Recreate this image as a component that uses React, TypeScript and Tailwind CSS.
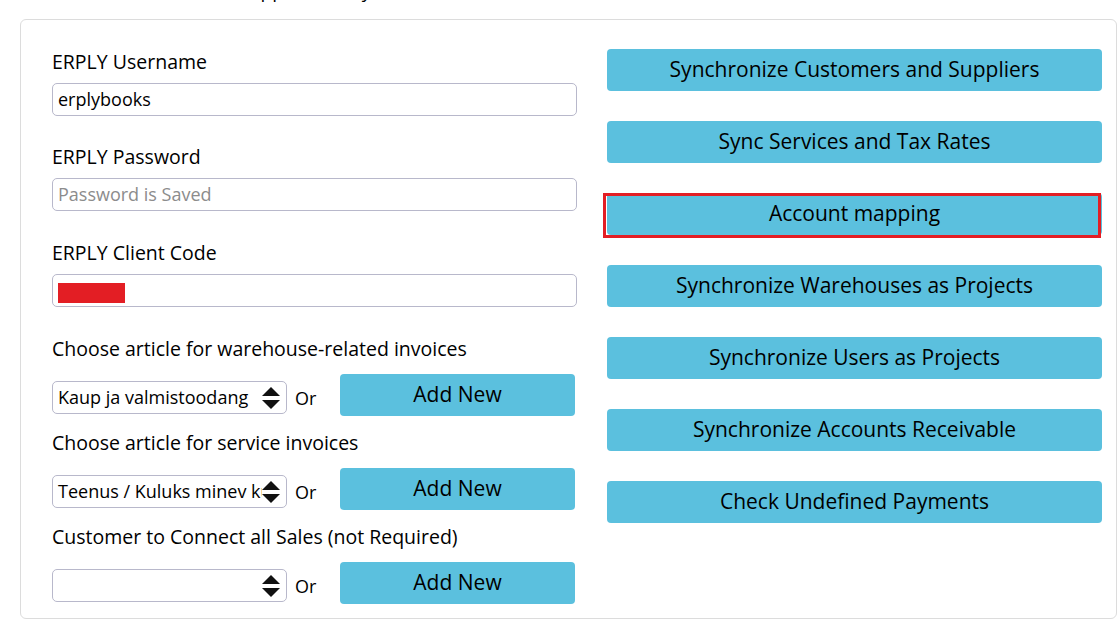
import React from 'react'

const rightButtons = [
  'Synchronize Customers and Suppliers',
  'Sync Services and Tax Rates',
  'Account mapping',
  'Synchronize Warehouses as Projects',
  'Synchronize Users as Projects',
  'Synchronize Accounts Receivable',
  'Check Undefined Payments',
]

function SelectArrows() {
  return (
    <svg width="20" height="24" viewBox="0 0 20 24" className="absolute right-[5px] top-[4px]">
      <polygon points="1,10 10,1 19,10" fill="#111" />
      <polygon points="1,14 19,14 10,23" fill="#111" />
    </svg>
  )
}

function FakeSelect({ value }: { value: string }) {
  return (
    <div className="relative h-[33px] w-[235px] shrink-0 rounded-[5px] border border-[#b8b8cb] bg-white">
      <div className="h-full w-[209px] overflow-hidden whitespace-nowrap pl-[5px] text-[18px] leading-[31px] text-black">
        {value}
      </div>
      <SelectArrows />
    </div>
  )
}

function AddRow({ value }: { value: string }) {
  return (
    <div className="flex h-[42px] items-center">
      <div className="mt-[5px] flex items-center">
        <FakeSelect value={value} />
        <span className="ml-[8px] mt-[2px] text-[18px] text-black">Or</span>
      </div>
      <button className="ml-auto mr-[2px] h-[42px] w-[235px] rounded-[4px] bg-[#5bc0de] text-[21px] text-black">
        Add New
      </button>
    </div>
  )
}

function TextField({ children }: { children?: React.ReactNode }) {
  return (
    <div className="relative mt-[9px] h-[33px] rounded-[5px] border border-[#b8b8cb] bg-white pl-[5px] text-[18px] leading-[31px]">
      {children}
    </div>
  )
}

export default function App() {
  return (
    <div className="min-h-[633px] bg-white font-['Open_Sans','Lato',sans-serif] text-black">
      <div className="flex h-[19px] items-end overflow-hidden pl-[250px]">
        <span className="mb-[18px] text-[19px] leading-[20px]">application sync with ERPLY</span>
      </div>
      <div className="ml-[20px] w-[1097px] rounded-[6px] border border-[#dcdcdc] pb-[14px] pl-[31px] pr-[14px] pt-[29px]">
        <div className="grid grid-cols-[525px_495px] gap-x-[30px]">
          <div className="pt-[1px]">
            <div className="text-[19.5px] leading-[24px]">ERPLY Username</div>
            <TextField>erplybooks</TextField>

            <div className="mt-[29px] text-[19.5px] leading-[24px]">ERPLY Password</div>
            <TextField>
              <span className="text-[#8c8c8c]">Password is Saved</span>
            </TextField>

            <div className="mt-[30px] text-[19.5px] leading-[24px]">ERPLY Client Code</div>
            <TextField>
              <span className="text-[14px]">1</span>
              <div className="absolute left-[5px] top-[8px] h-[20px] w-[67px] bg-[#e31e24]" />
            </TextField>

            <div className="mt-[30px] text-[19.5px] leading-[24px]">
              Choose article for warehouse-related invoices
            </div>
            <div className="mt-[13px]">
              <AddRow value="Kaup ja valmistoodang" />
            </div>

            <div className="mt-[15px] text-[19.5px] leading-[24px]">
              Choose article for service invoices
            </div>
            <div className="mt-[13px]">
              <AddRow value="Teenus / Kuluks minev kulu" />
            </div>

            <div className="mt-[15px] text-[19.5px] leading-[24px]">
              Customer to Connect all Sales (not Required)
            </div>
            <div className="mt-[13px]">
              <AddRow value="" />
            </div>
          </div>

          <div className="flex flex-col gap-[30px]">
            {rightButtons.map((label) => (
              <div key={label} className="relative">
                <button className="h-[42px] w-full rounded-[4px] bg-[#5bc0de] text-[21px] text-black">
                  {label}
                </button>
                {label === 'Account mapping' && (
                  <div className="absolute -bottom-[3px] -left-[4px] right-[1px] top-0 border-[3px] border-[#e31e24]" />
                )}
              </div>
            ))}
          </div>
        </div>
      </div>
    </div>
  )
}
